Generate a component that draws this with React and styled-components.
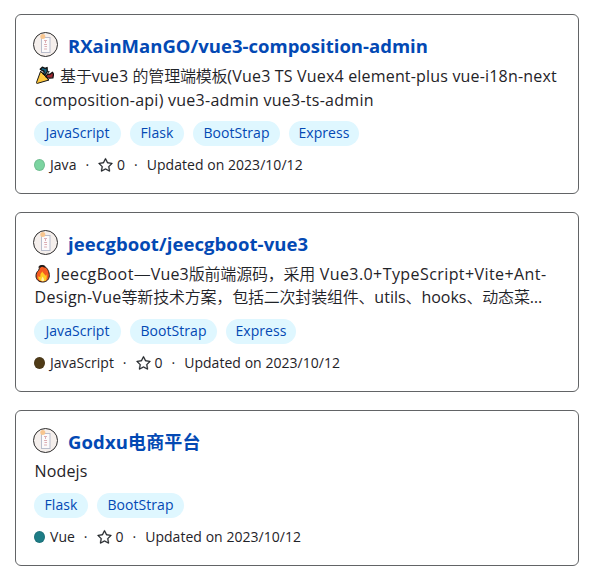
import React from 'react';
import styled, { createGlobalStyle } from 'styled-components';
import { GoStar } from 'react-icons/go';

const GlobalStyle = createGlobalStyle`
  * { box-sizing: border-box; }
  body { margin: 0; background: #fff; }
`;

const RepoList = styled.main`
  display: flex;
  flex-direction: column;
  gap: 18px;
  padding: 14px 16px 0 15px;
  font-family: 'Open Sans', 'Noto Sans CJK SC', sans-serif;
  color: #1f2328;
`;

const Card = styled.article`
  height: ${(p) => p.$height}px;
  padding: 17px 17px 0;
  border: 1px solid #626466;
  border-radius: 6px;
`;

const Header = styled.header`
  display: flex;
  align-items: flex-start;
  gap: 9px;
  height: 32px;
`;

const AvatarIcon = styled.svg`
  flex: none;
  width: 26px;
  height: 26px;
`;

const Title = styled.h3`
  margin: 0;
  font-size: 18.5px;
  line-height: 28px;
  font-weight: 700;
  letter-spacing: ${(p) => p.$track || 0.015}px;
  color: #0349b4;
  white-space: nowrap;
`;

const TitleCjk = styled.span`
  font-family: 'Noto Sans CJK SC', sans-serif;
  font-size: 18px;
  line-height: 0;
`;

const Description = styled.div`
  margin-left: 1.5px;
  font-size: 16px;
`;

const Line = styled.div`
  height: ${(p) => p.$height || 24}px;
  line-height: ${(p) => p.$leading || 24}px;
  white-space: pre;
`;

const Latin = styled.span`
  letter-spacing: ${(p) => p.$track || 0}px;
`;

const Cjk = styled.span`
  font-family: 'Noto Sans CJK SC', sans-serif;
  font-weight: 350;
  line-height: 0;
  letter-spacing: -0.2px;
`;

const Dash = styled.span`
  display: inline-block;
  width: 17px;
  font-size: 17px;
  line-height: 20px;
  font-weight: 300;
`;

const EmojiIcon = styled.svg`
  width: 19px;
  height: 19px;
  margin-right: ${(p) => p.$gap}px;
  vertical-align: -3px;
`;

const Tags = styled.div`
  display: flex;
  gap: 9px;
  margin: 9px 0 0 1px;
`;

const Tag = styled.span`
  width: ${(p) => p.$width}px;
  height: 25px;
  border-radius: 13px;
  background: #dff7ff;
  color: #0349b4;
  font-size: 14px;
  line-height: 23px;
  letter-spacing: 0.05px;
  text-align: center;
`;

const Meta = styled.footer`
  display: flex;
  align-items: center;
  height: 20px;
  margin: 9px 0 0 1px;
  font-size: 14px;
  line-height: 20px;
  letter-spacing: 0.04px;
  white-space: nowrap;
`;

const LanguageDot = styled.i`
  width: 11px;
  height: 12px;
  margin-right: 5px;
  border-radius: 50%;
  background: ${(p) => p.$color};
  box-shadow: inset 0 0 0 1px rgba(31, 35, 40, 0.12);
`;

const Separator = styled.span`
  width: 21.6px;
  text-align: center;
`;

const Star = styled(GoStar)`
  width: 15px;
  height: 15px;
  margin: 1px 4px 0 0;
  stroke: currentColor;
  stroke-width: 0.5px;
  overflow: visible;
`;

const Avatar = () => (
  <AvatarIcon viewBox="0 0 26 26">
    <circle cx="12.5" cy="12.5" r="12" fill="#f5efec" stroke="#2b2b2b" />
    <rect x="8.5" y="5.5" width="8.5" height="15" fill="#fbfafb" stroke="#b9bdcc" />
    <circle cx="9.8" cy="4.6" r="2.5" fill="#f7c58f" />
    <path d="M11 8.5h3M12.5 8v3M11 12.5h3M11.5 14.5h2.5M11 17h3" stroke="#dcaeb4" strokeWidth="1" fill="none" />
  </AvatarIcon>
);

const Popper = () => (
  <EmojiIcon $gap={6.6} viewBox="0 0 19 19">
    <path d="M5.5 5.5 14 14 2.3 17.4Q1.3 17.5 1.5 16.5z" fill="#ffc83d" stroke="#171717" strokeLinejoin="round" />
    <path d="M5.5 5.8C7.5 6 12.5 10.5 12.5 13.2L14 14 5.5 5z" fill="#d67d00" stroke="#171717" strokeWidth=".7" />
    <path d="M8 7.8C10 6.5 9 4.5 7.6 4.8L5.2 3.2 7.3 1.2l2.8 1.1 2-.8.2 4.2L10 9z" fill="#15607c" stroke="#111" strokeWidth="1.3" strokeLinejoin="round" />
    <path d="M10.8 10.8 12.5 8l2.5.3 2.5-2 1 2-.6 3.5-3.4.3-2.2-.3z" fill="#9e2731" stroke="#111" strokeWidth="1.3" strokeLinejoin="round" />
    <path d="M13 6.7 14.2 5.2" stroke="#111" strokeWidth="1.2" />
  </EmojiIcon>
);

const Fire = () => (
  <EmojiIcon $gap={2.4} viewBox="1 0 19 19">
    <path d="M5 2.5C7.2.7 11 1.3 11.8 3.6 13.2 4 15.5 8 15.3 11.8 15.2 15.6 12.4 18 8.8 18 4.7 18 2 15.5 2 11.9 2 9.4 3 7.7 4.5 6.4Q5.8 5 5 2.5z" fill="#f45b20" stroke="#171717" strokeLinejoin="round" />
    <path d="M5 2.5C7.2.7 11 1.3 11.8 3.6L10 3.4Q8 2 6 4z" fill="#171717" />
    <path d="M8.5 7.2C8.5 9.4 11 9.5 11.2 11.8L12.5 10.5Q14 17.4 8.8 17.3 3.7 17 4.3 12.3L6.2 13Q5.8 9.6 8.5 7.2z" fill="#ffcc24" />
    <path d="M8.7 12.5q2.8 4.5 0 4.8-2.8-.3 0-4.8z" fill="#fff0a0" />
  </EmojiIcon>
);

const tagWidths = { JavaScript: 87, Flask: 54, BootStrap: 87, Express: 70 };

const repos = [
  {
    height: 180,
    title: 'RXainManGO/vue3-composition-admin',
    description: (
      <>
        <Line>
          <Popper />
          <Cjk>基于</Cjk>
          <Latin $track={0.15}>vue3 </Latin>
          <Cjk>的管理端模板</Cjk>
          <Latin $track={0.18}>(Vue3 TS Vuex4 element-plus vue-i18n-next</Latin>
        </Line>
        <Line>
          <Latin $track={0.26}>composition-api) vue3-admin vue3-ts-admin</Latin>
        </Line>
      </>
    ),
    tags: ['JavaScript', 'Flask', 'BootStrap', 'Express'],
    language: 'Java',
    color: '#7bd4a0',
  },
  {
    height: 180,
    title: 'jeecgboot/jeecgboot-vue3',
    track: 0.09,
    description: (
      <>
        <Line $height={23}>
          <Fire />
          <Latin $track={0.45}>JeecgBoot</Latin>
          <Dash>—</Dash>
          <Latin $track={0.1}>Vue3</Latin>
          <Cjk>版前端源码，采用</Cjk>
          <Latin $track={0.42}> Vue3.0+TypeScript+Vite+Ant-</Latin>
        </Line>
        <Line $height={25}>
          <Latin $track={0.28}>Design-Vue</Latin>
          <Cjk>等新技术方案，包括二次封装组件、</Cjk>
          <Latin>utils</Latin>
          <Cjk>、</Cjk>
          <Latin>hooks</Latin>
          <Cjk>、动态菜</Cjk>
          <Latin>…</Latin>
        </Line>
      </>
    ),
    tags: ['JavaScript', 'BootStrap', 'Express'],
    language: 'JavaScript',
    color: '#4f3b17',
  },
  {
    height: 156,
    title: 'Godxu',
    titleCjk: '电商平台',
    track: 0.12,
    description: (
      <Line $leading={22}>
        <Latin $track={0.15}>Nodejs</Latin>
      </Line>
    ),
    tags: ['Flask', 'BootStrap'],
    language: 'Vue',
    color: '#1d7d86',
  },
];

const RepoCard = ({ repo }) => (
  <Card $height={repo.height}>
    <Header>
      <Avatar />
      <Title $track={repo.track}>
        {repo.title}
        {repo.titleCjk && <TitleCjk>{repo.titleCjk}</TitleCjk>}
      </Title>
    </Header>
    <Description>{repo.description}</Description>
    <Tags>
      {repo.tags.map((tag) => (
        <Tag key={tag} $width={tagWidths[tag]}>
          {tag}
        </Tag>
      ))}
    </Tags>
    <Meta>
      <LanguageDot $color={repo.color} />
      <span>{repo.language}</span>
      <Separator>·</Separator>
      <Star />
      <span>0</span>
      <Separator>·</Separator>
      <span>Updated on 2023/10/12</span>
    </Meta>
  </Card>
);

export default function App() {
  return (
    <>
      <GlobalStyle />
      <RepoList>
        {repos.map((repo) => (
          <RepoCard key={repo.title} repo={repo} />
        ))}
      </RepoList>
    </>
  );
}
